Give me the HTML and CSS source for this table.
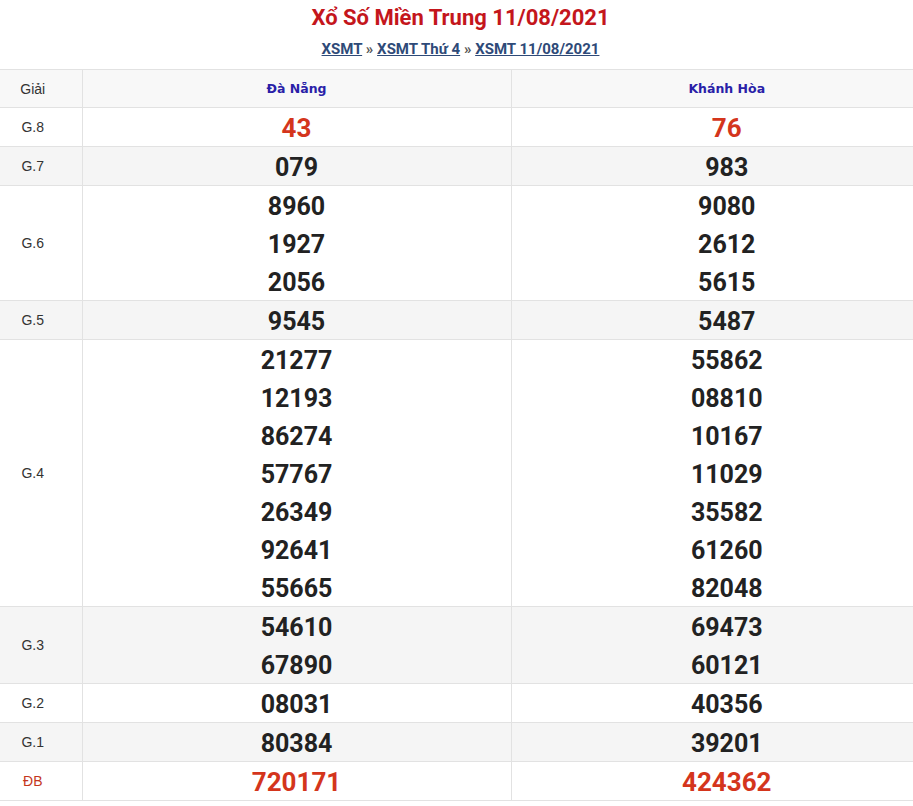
FILE: index.html
```html
<!DOCTYPE html>
<html lang="vi">
<head>
<meta charset="utf-8">
<title>Xổ Số Miền Trung 11/08/2021</title>
<link rel="stylesheet" href="styles.css">
</head>
<body>
<div class="head">
  <h1 class="title">Xổ Số Miền Trung 11/08/2021</h1>
  <div class="crumbs"><a href="#">XSMT</a> » <a href="#">XSMT Thứ 4</a> » <a href="#">XSMT 11/08/2021</a></div>
</div>
<table class="kq">
  <colgroup><col class="c1"><col class="c2"><col class="c3"></colgroup>
  <thead>
    <tr class="hdr"><th class="lbl">Giải</th><th class="prov">Đà Nẵng</th><th class="prov">Khánh Hòa</th></tr>
  </thead>
  <tbody>
    <tr><td class="lbl">G.8</td><td class="num red"><div>43</div></td><td class="num red"><div>76</div></td></tr>
    <tr class="alt"><td class="lbl">G.7</td><td class="num"><div>079</div></td><td class="num"><div>983</div></td></tr>
    <tr><td class="lbl">G.6</td><td class="num"><div>8960</div><div>1927</div><div>2056</div></td><td class="num"><div>9080</div><div>2612</div><div>5615</div></td></tr>
    <tr class="alt"><td class="lbl">G.5</td><td class="num"><div>9545</div></td><td class="num"><div>5487</div></td></tr>
    <tr><td class="lbl">G.4</td><td class="num"><div>21277</div><div>12193</div><div>86274</div><div>57767</div><div>26349</div><div>92641</div><div>55665</div></td><td class="num"><div>55862</div><div>08810</div><div>10167</div><div>11029</div><div>35582</div><div>61260</div><div>82048</div></td></tr>
    <tr class="alt"><td class="lbl">G.3</td><td class="num"><div>54610</div><div>67890</div></td><td class="num"><div>69473</div><div>60121</div></td></tr>
    <tr><td class="lbl">G.2</td><td class="num"><div>08031</div></td><td class="num"><div>40356</div></td></tr>
    <tr class="alt"><td class="lbl">G.1</td><td class="num"><div>80384</div></td><td class="num"><div>39201</div></td></tr>
    <tr><td class="lbl db">ĐB</td><td class="num red"><div>720171</div></td><td class="num red"><div>424362</div></td></tr>
  </tbody>
</table>
</body>
</html>
```
FILE: styles.css
```css
html, body {
  margin: 0;
  padding: 0;
  background: #fff;
  overflow-x: hidden;
}
body {
  font-family: Roboto, "Liberation Sans", Arial, sans-serif;
  color: #222;
}
.head {
  width: 921px;
  text-align: center;
  height: 69px;
}
.title {
  margin: 0;
  padding-top: 4px;
  font-size: 22px;
  line-height: 28px;
  font-weight: 700;
  color: #c4161c;
}
.crumbs {
  margin-top: 7px;
  font-size: 15px;
  line-height: 20px;
  font-weight: 700;
  color: #555;
}
.crumbs a {
  color: #2e4a78;
  text-decoration: underline;
}
.kq {
  width: 943px;
  border-collapse: collapse;
  table-layout: fixed;
}
.c1 { width: 82px; }
.c2 { width: 429px; }
.kq th, .kq td {
  border: 1px solid #e2e2e2;
  padding: 0;
  text-align: center;
  vertical-align: middle;
}
.kq tr > :first-child { border-left: none; }
.hdr {
  background: #f8f8f8;
  height: 38px;
}
.hdr .lbl {
  font-weight: 400;
}
.lbl {
  font-family: "Liberation Sans", Arial, sans-serif;
  font-size: 14px;
  color: #333;
  padding-right: 16px !important;
}
.db { color: #c4361c; }
.prov {
  font-family: "DejaVu Sans", Verdana, sans-serif;
  font-size: 12.5px;
  font-weight: 700;
  color: #2a1fa8;
}
.alt { background: #f5f5f5; }
.num {
  font-size: 25px;
  font-weight: 700;
  color: #222;
}
.num div {
  height: 38px;
  line-height: 42px;
}
.num.red {
  color: #d4351c;
  font-size: 26px;
}
.num.red div {
  line-height: 40px;
}
```
